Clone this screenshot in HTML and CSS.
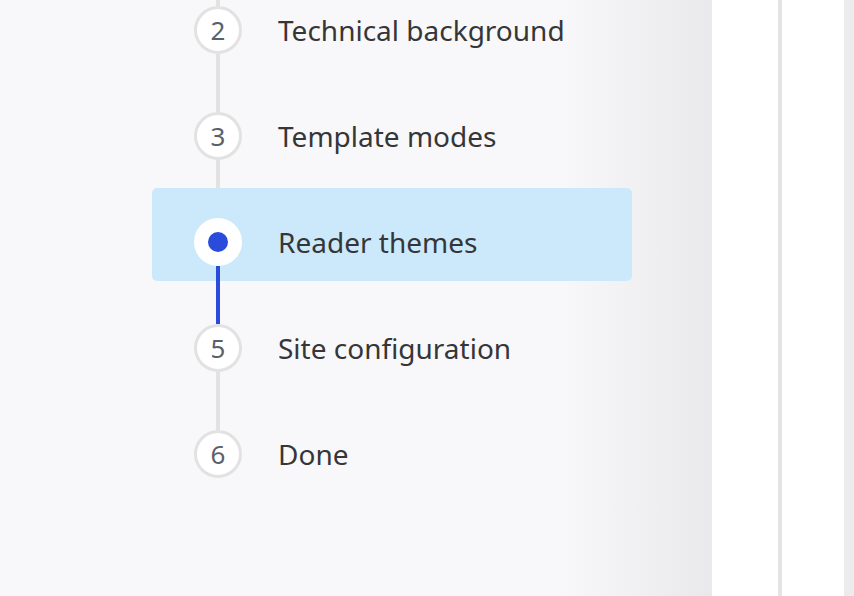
FILE: index.html
```html
<!DOCTYPE html>
<html lang="en">
<head>
<meta charset="utf-8">
<title>Onboarding wizard</title>
<link rel="stylesheet" href="styles.css">
</head>
<body>
<div class="page">
  <aside class="sidebar">
    <ol class="steps">
      <li class="step first"><span class="dot">2</span><span class="label">Technical background</span></li>
      <li class="step"><span class="dot">3</span><span class="label">Template modes</span></li>
      <li class="step active"><span class="dot"><span class="pip"></span></span><span class="label">Reader themes</span></li>
      <li class="step"><span class="dot">5</span><span class="label">Site configuration</span></li>
      <li class="step last"><span class="dot">6</span><span class="label">Done</span></li>
    </ol>
  </aside>
  <div class="col col-a"></div>
  <div class="divider"></div>
  <div class="col col-b"></div>
  <div class="edge"></div>
</div>
</body>
</html>
```
FILE: styles.css
```css
* { box-sizing: border-box; }
html, body { margin: 0; padding: 0; height: 100%; overflow: hidden; }
body { font-family: "Noto Sans", "Open Sans", sans-serif; background: #fff; }
.page { display: flex; height: 596px; }
.sidebar {
  width: 712px;
  flex: none;
  background: linear-gradient(to right, #f8f8fa 0, #f8f8fa 560px, #e9e9eb 712px);
  padding-left: 152px;
  overflow: hidden;
}
.col-a { width: 66px; background: #fff; }
.divider { width: 4px; background: #e4e4e4; }
.col-b { width: 62px; background: #fff; }
.edge { width: 10px; background: #ececec; }

.steps { list-style: none; margin: -24px 0 0; padding: 0; width: 480px; }
.step {
  position: relative;
  display: flex;
  align-items: center;
  height: 93px;
  padding: 30px 0 15px 42px;
  margin-bottom: 13px;
  border-radius: 5px;
}
.step::after {
  content: "";
  position: absolute;
  left: 64px;
  top: 78px;
  width: 4px;
  height: 58px;
  background: #e2e2e2;
}
.step.first::before {
  content: "";
  position: absolute;
  left: 64px;
  top: 0;
  width: 4px;
  height: 30px;
  background: #e2e2e2;
}
.step.last::after { display: none; }
.step.active { background: #cce9fb; }
.step.active::after { background: #2a4bdb; }
.dot {
  width: 48px;
  height: 48px;
  flex: none;
  border-radius: 50%;
  border: 3px solid #e2e2e2;
  background: #fff;
  display: flex;
  align-items: center;
  justify-content: center;
  font-size: 26px;
  color: #5a616c;
  position: relative;
  z-index: 1;
}
.active .dot { border-color: #fff; }
.pip { width: 20px; height: 20px; border-radius: 50%; background: #2a4bdb; }
.label {
  margin-left: 36px;
  font-size: 28px;
  color: #363638;
  white-space: nowrap;
}
```
